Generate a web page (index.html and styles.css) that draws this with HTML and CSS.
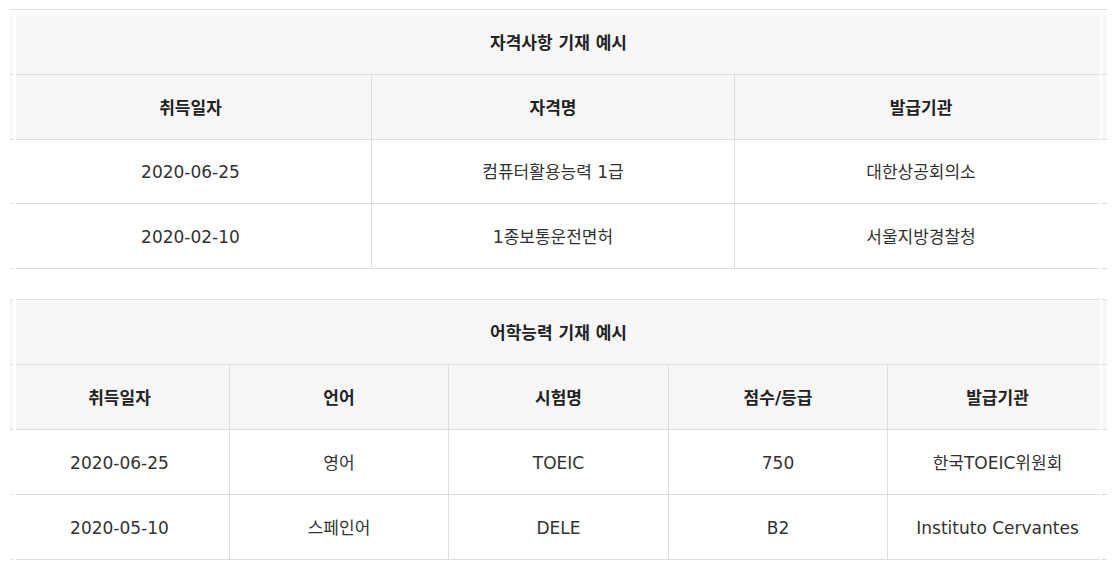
FILE: index.html
```html
<!DOCTYPE html>
<html lang="ko">
<head>
<meta charset="utf-8">
<title>자격사항 / 어학능력 기재 예시</title>
<link rel="stylesheet" href="styles.css">
</head>
<body>
<section class="sheet sheet--first">
  <div class="row row--title row--gap"><div class="cell">자격사항 기재 예시</div></div>
  <div class="row row--head cols3">
    <div class="cell">취득일자</div>
    <div class="cell">자격명</div>
    <div class="cell">발급기관</div>
  </div>
  <div class="row cols3 row--short">
    <div class="cell">2020-06-25</div>
    <div class="cell">컴퓨터활용능력 1급</div>
    <div class="cell">대한상공회의소</div>
  </div>
  <div class="row cols3">
    <div class="cell">2020-02-10</div>
    <div class="cell">1종보통운전면허</div>
    <div class="cell">서울지방경찰청</div>
  </div>
</section>

<section class="sheet sheet--second">
  <div class="row row--title row--top"><div class="cell">어학능력 기재 예시</div></div>
  <div class="row row--head cols5">
    <div class="cell">취득일자</div>
    <div class="cell">언어</div>
    <div class="cell">시험명</div>
    <div class="cell">점수/등급</div>
    <div class="cell">발급기관</div>
  </div>
  <div class="row cols5">
    <div class="cell">2020-06-25</div>
    <div class="cell">영어</div>
    <div class="cell">TOEIC</div>
    <div class="cell">750</div>
    <div class="cell">한국TOEIC위원회</div>
  </div>
  <div class="row cols5">
    <div class="cell">2020-05-10</div>
    <div class="cell">스페인어</div>
    <div class="cell">DELE</div>
    <div class="cell">B2</div>
    <div class="cell">Instituto Cervantes</div>
  </div>
</section>
</body>
</html>
```

FILE: styles.css
```css
html, body {
  margin: 0;
  padding: 0;
  background: #ffffff;
}

body {
  font-family: "DejaVu Sans", "Noto Sans CJK KR", sans-serif;
  font-size: 17px;
  color: #333333;
}

.sheet {
  position: relative;
  width: 1097px;
  margin-left: 10px;
}

.sheet--first {
  margin-top: 9px;
  border-top: 1px solid #dddddd;
}

.sheet--second {
  margin-top: 30px;
}

/* white slits near the left and right edges of the tables */
.sheet::before,
.sheet::after {
  content: "";
  position: absolute;
  top: 0;
  bottom: 0;
  background: #ffffff;
}

.sheet::before {
  left: 3px;
  width: 3px;
}

.sheet::after {
  right: 5px;
  width: 2px;
}

.row {
  display: grid;
  height: 64px;
  border-bottom: 1px solid #dddddd;
}

.row--short {
  height: 63px;
}

.row--title,
.row--head {
  background: #f7f7f7;
  font-weight: 700;
  color: #222222;
}

.row--gap {
  box-shadow: inset 0 5px 0 #ffffff;
}

.row--top {
  border-top: 1px solid #dddddd;
}

.cols3 {
  grid-template-columns: 361px 363px 373px;
}

.cols5 {
  grid-template-columns: 219px 219px 220px 219px 220px;
}

.cell {
  display: flex;
  align-items: center;
  justify-content: center;
  box-sizing: border-box;
  padding-top: 1px;
  line-height: 24px;
  white-space: nowrap;
}

.cols3 .cell + .cell,
.cols5 .cell + .cell {
  border-left: 1px solid #dddddd;
}
```
